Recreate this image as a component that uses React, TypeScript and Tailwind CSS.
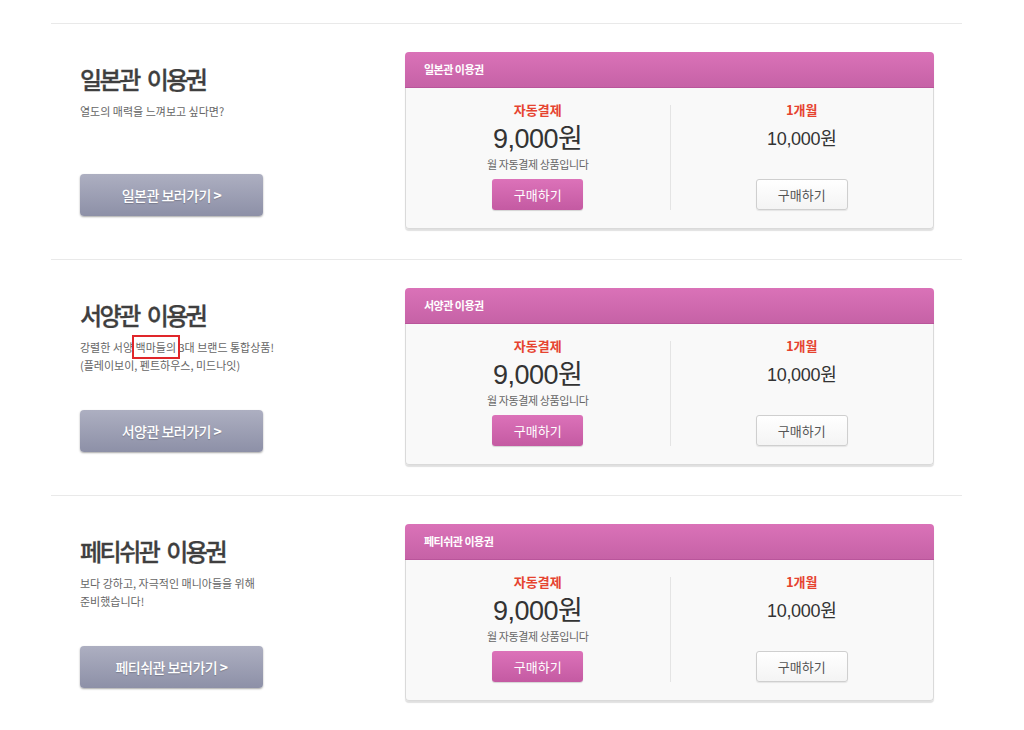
const PASSES = [
    {
        name: '일본관',
        desc: ['열도의 매력을 느껴보고 싶다면?'],
    },
    {
        name: '서양관',
        desc: ['강렬한 서양 |백마들의| 3대 브랜드 통합상품!', '(플레이보이, 펜트하우스, 미드나잇)'],
    },
    {
        name: '페티쉬관',
        desc: ['보다 강하고, 자극적인 매니아들을 위해', '준비했습니다!'],
    },
];

const KR = "font-['Noto_Sans_CJK_KR','Noto_Sans',sans-serif]";
const NUM = "font-['Liberation_Sans','Noto_Sans_CJK_KR',sans-serif]";

// "|...|" marks the boxed part of a line
const DescLine = ({ text }: { text: string }) => {
    const parts = text.split('|');
    return (
        <p className="leading-[18px]">
            {parts.map((p, i) =>
                i % 2 === 1 ? (
                    <span key={i} className="outline-2 outline-[#e0262a] outline-offset-[2px]">
                        {p}
                    </span>
                ) : (
                    <span key={i}>{p}</span>
                ),
            )}
        </p>
    );
};

const PassCard = ({ name }: { name: string }) => (
    <div className="w-[529px] rounded-[4px] shadow-[0_2px_1px_rgba(0,0,0,0.12)]">
        <div className="h-[36px] rounded-t-[4px] bg-gradient-to-b from-[#da72b8] to-[#c662a6] border-b border-[#b9559b] flex items-center pl-[19px]">
            <span className="text-[11px] font-bold text-white tracking-[-0.5px]">{name} 이용권</span>
        </div>
        <div className="bg-[#f9f9f9] border border-t-0 border-[#dadada] rounded-b-[4px] pt-[17px] pb-[18px] grid grid-cols-2">
            {/* 자동결제 */}
            <div className="flex flex-col items-center">
                <p className="-mt-[3px] h-[16px] leading-[16px] text-[13px] font-semibold text-[#e6432f]">
                    자동결제
                </p>
                <p className={`${NUM} mt-[4px] h-[30px] flex items-baseline leading-[30px] text-[27px] text-[#333] tracking-[-0.5px]`}>
                    9,000<span className={`${KR} leading-[30px]`}>원</span>
                </p>
                <p className="mt-[5px] h-[14px] leading-[14px] text-[11px] text-[#666] tracking-[-0.4px] whitespace-pre">
                    월 자동결제 상품입니다
                </p>
                <button className="mt-[8px] w-[91px] h-[31px] rounded-[3px] bg-gradient-to-b from-[#dc72b9] to-[#c45aa2] text-white text-[13px] shadow-[0_1px_1px_rgba(0,0,0,0.15)]">
                    구매하기
                </button>
            </div>
            {/* 1개월 */}
            <div className="flex flex-col items-center border-l border-[#e4e4e4]">
                <p className="-mt-[3px] h-[16px] leading-[16px] text-[13px] font-semibold text-[#e6432f]">
                    1개월
                </p>
                <p className={`${NUM} mt-[8px] h-[22px] flex items-baseline leading-[22px] text-[18px] text-[#333] tracking-[-0.3px]`}>
                    10,000<span className={`${KR} leading-[22px]`}>원</span>
                </p>
                <button className="mt-auto w-[92px] h-[31px] rounded-[3px] bg-gradient-to-b from-white to-[#f4f4f4] border border-[#cfcfcf] text-[#555] text-[13px] shadow-[0_1px_1px_rgba(0,0,0,0.08)]">
                    구매하기
                </button>
            </div>
        </div>
    </div>
);

export default function App() {
    return (
        <div className={`${KR} min-h-screen bg-white pt-[23px]`}>
            <div className="ml-[51px] w-[911px]">
                {PASSES.map((p) => (
                    <section key={p.name} className="border-t border-[#e9e9e9] pt-[28px] pb-[30px] flex">
                        {/* Left — title & link */}
                        <div className="w-[354px] pl-[29px] flex flex-col">
                            <h2 className="mt-[12px] h-[30px] leading-[30px] text-[24px] font-medium text-[#3f3f3f] tracking-[-2.5px] [word-spacing:5px] [-webkit-text-stroke:0.3px_#3f3f3f]">
                                {p.name} 이용권
                            </h2>
                            <div className="mt-[8px] text-[11px] text-[#666]">
                                {p.desc.map((d) => (
                                    <DescLine key={d} text={d} />
                                ))}
                            </div>
                            <button className="mt-auto mb-[13px] w-[183px] h-[42px] rounded-[4px] bg-gradient-to-b from-[#adafc1] to-[#8d90a7] shadow-[0_1px_2px_rgba(0,0,0,0.35)] text-white text-[14px] font-medium tracking-[-0.5px] [text-shadow:0_1px_1px_rgba(0,0,0,0.2)]">
                                {p.name} 보러가기 <span className="font-bold">&gt;</span>
                            </button>
                        </div>

                        {/* Right — pricing card */}
                        <PassCard name={p.name} />
                    </section>
                ))}
            </div>
        </div>
    );
}
